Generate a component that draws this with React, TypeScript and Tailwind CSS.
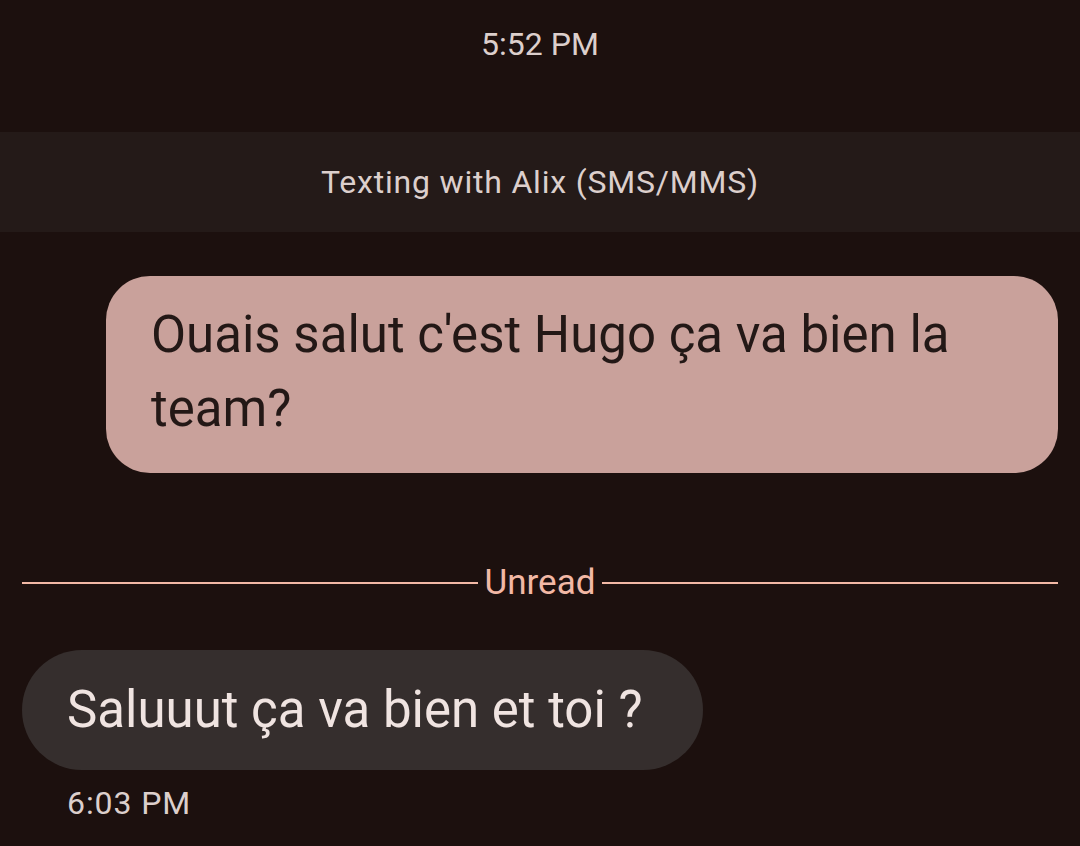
import React from 'react';

const App: React.FC = () => {
  return (
    <div className="w-full h-[846px] overflow-hidden bg-[#1c100e] flex flex-col font-['Roboto',sans-serif]">
      <div className="h-[132px] pt-[24px] flex justify-center">
        <span className="text-[32px] leading-[40px] text-[#dccfcc]">5:52 PM</span>
      </div>

      <div className="h-[100px] bg-[#241a18] flex items-center justify-center">
        <span className="text-[32px] leading-[40px] tracking-[0.8px] text-[#dccfcc]">Texting with Alix (SMS/MMS)</span>
      </div>

      <div className="mt-[44px] ml-[106px] mr-[22px] rounded-[44px] bg-[#c9a19b] px-[45px] pt-[22px] pb-[27px]">
        <p className="text-[51px] leading-[74px] text-[#231816]">Ouais salut c'est Hugo ça va bien la team?</p>
      </div>

      <div className="mt-[90px] mx-[22px] h-[40px] flex items-center gap-[7px]">
        <div className="flex-1 h-[2px] bg-[#f2b8a5]" />
        <span className="text-[35px] leading-[40px] text-[#f2b8a5]">Unread</span>
        <div className="flex-1 h-[2px] bg-[#f2b8a5]" />
      </div>

      <div className="mt-[47px] ml-[22px] w-fit h-[120px] rounded-full bg-[#352e2d] pl-[45px] pr-[60px] flex items-center">
        <span className="text-[51px] leading-[74px] text-[#f0e4e1]">Saluuut ça va bien et toi ?</span>
      </div>

      <div className="mt-[13px] ml-[67px]">
        <span className="text-[32px] leading-[40px] tracking-[0.9px] text-[#dccfcc]">6:03 PM</span>
      </div>
    </div>
  );
};

export default App;
